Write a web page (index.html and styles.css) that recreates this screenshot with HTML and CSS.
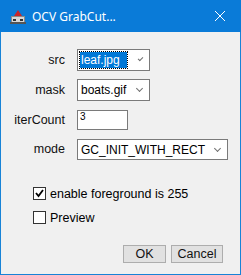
FILE: index.html
```html
<!DOCTYPE html>
<html lang="en">
  <head>
    <meta charset="UTF-8" />
    <meta name="viewport" content="width=device-width, initial-scale=1.0" />
    <title>OCV GrabCut</title>
    <link rel="stylesheet" href="styles.css">
  </head>
  <body>
    <div class="window">
      <div class="titlebar">
        <svg class="app-icon" width="16" height="16" viewBox="0 0 16 16">
          <rect x="1" y="7" width="14" height="7" fill="#8a8a8a" />
          <rect x="2" y="8" width="12" height="5" fill="#d8d8d8" />
          <path d="M8 1 L12 7 L4 7 Z" fill="#c8262a" />
          <rect x="3" y="10" width="3" height="2" fill="#333" />
          <rect x="10" y="10" width="3" height="2" fill="#333" />
          <rect x="0" y="13" width="16" height="2" fill="#555" />
        </svg>
        <span class="title">OCV GrabCut...</span>
        <svg class="close" width="12" height="12" viewBox="0 0 12 12">
          <path d="M1 1 L11 11 M11 1 L1 11" stroke="#fff" stroke-width="1" />
        </svg>
      </div>

      <div class="content">
        <div class="fields">
          <label class="field-label">src</label>
          <div class="combo combo-short">
            <span class="combo-text selected">leaf.jpg</span>
            <span class="chevron"></span>
          </div>

          <label class="field-label">mask</label>
          <div class="combo combo-short">
            <span class="combo-text">boats.gif</span>
            <span class="chevron"></span>
          </div>

          <label class="field-label">iterCount</label>
          <div class="textbox">3</div>

          <label class="field-label">mode</label>
          <div class="combo combo-wide">
            <span class="combo-text">GC_INIT_WITH_RECT</span>
            <span class="chevron"></span>
          </div>
        </div>

        <div class="checks">
          <label class="check">
            <span class="box checked">
              <svg width="9" height="9" viewBox="0 0 9 9">
                <path d="M1 4 L3.5 7 L8 1" stroke="#000" stroke-width="1.8" fill="none" />
              </svg>
            </span>
            enable foreground is 255
          </label>
          <label class="check">
            <span class="box"></span>
            Preview
          </label>
        </div>

        <div class="buttons">
          <button class="btn btn-ok">OK</button>
          <button class="btn btn-cancel">Cancel</button>
        </div>
      </div>
    </div>
  </body>
</html>
```

FILE: styles.css
```css
body {
  margin: 0;
  font-family: "Liberation Sans", Arial, sans-serif;
  font-size: 12px;
  color: #000;
  background-color: #f0f0f0;
}
.window {
  width: 241px;
  height: 275px;
  box-sizing: border-box;
  border: 1px solid #1883d7;
  border-top: none;
  background-color: #f0f0f0;
  display: flex;
  flex-direction: column;
}
.titlebar {
  height: 32px;
  margin: 0 -1px;
  background-color: #0a7bd8;
  display: flex;
  align-items: center;
  padding-left: 10px;
}
.app-icon {
  margin-top: 1px;
}
.title {
  font-family: "Noto Sans", "Open Sans", sans-serif;
  font-size: 12px;
  color: #fff;
  margin-left: 6px;
  flex: 1;
}
.close {
  margin-right: 15px;
}
.content {
  flex: 1;
  padding-top: 17px;
}
.fields {
  display: grid;
  grid-template-columns: 64px auto;
  column-gap: 12px;
  row-gap: 8px;
  align-items: center;
  justify-items: start;
}
.field-label {
  justify-self: end;
  font-size: 12.5px;
  color: #111;
}
.combo {
  height: 22px;
  box-sizing: border-box;
  background-color: #fff;
  border: 1px solid #7a7a7a;
  display: flex;
  align-items: center;
  padding-left: 2px;
}
.combo-short {
  width: 73px;
}
.combo-wide {
  width: 151px;
  height: 21px;
  margin-top: 1px;
}
.combo-text {
  flex: 1;
  font-size: 12px;
  padding: 1px 1px;
}
.combo-text.selected {
  flex: 0 0 auto;
  width: 45px;
  background-color: #0078d7;
  color: #fff;
  outline: 1px dotted #000;
  margin-right: 12px;
}
.chevron {
  width: 4px;
  height: 4px;
  border-right: 1px solid #707070;
  border-bottom: 1px solid #707070;
  transform: rotate(45deg);
  margin: 0 7px 3px 0;
}
.textbox {
  width: 51px;
  height: 20px;
  box-sizing: border-box;
  background-color: #fff;
  border: 1px solid #7a7a7a;
  font-size: 10px;
  line-height: 10px;
  padding: 1px 0 0 2px;
  margin-top: 1px;
}
.checks {
  margin-top: 27px;
  padding-left: 32px;
  display: flex;
  flex-direction: column;
  gap: 11px;
}
.check {
  display: flex;
  align-items: center;
  gap: 4px;
  font-size: 12.5px;
  height: 13px;
}
.box {
  width: 13px;
  height: 13px;
  box-sizing: border-box;
  border: 1px solid #333;
  background-color: #fff;
  display: flex;
  align-items: center;
  justify-content: center;
}
.buttons {
  margin-top: 21px;
  display: flex;
  justify-content: flex-end;
  gap: 5px;
  padding-right: 17px;
}
.btn {
  height: 18px;
  box-sizing: border-box;
  background-color: #e1e1e1;
  border: 1px solid #adadad;
  font-family: "Liberation Sans", Arial, sans-serif;
  font-size: 12.5px;
  color: #111;
  padding: 0;
}
.btn-ok {
  width: 43px;
}
.btn-cancel {
  width: 52px;
}
```
